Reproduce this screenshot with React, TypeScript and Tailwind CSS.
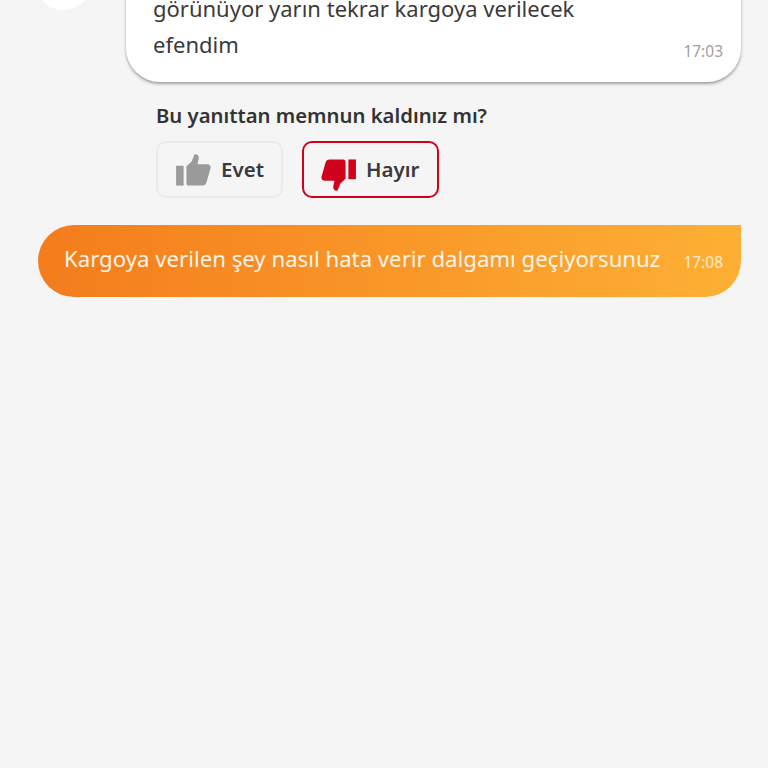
function ThumbUp() {
    return (
        <svg width="35" height="32" viewBox="0 0 37 34" className="shrink-0">
            <rect x="0" y="12.5" width="8" height="21" fill="#9a9a9a" />
            <path d="M11 13 L16.5 8 L19.5 0.5 C22.5 -0.2 24.5 1.8 24 5 L22.8 11 L33.5 11 C36 11 37 13 36.5 15.5 L32.5 29.5 C31.8 32.5 30 33.5 28 33.5 L13.5 33.5 C12 33.5 11 32.5 11 31 Z" fill="#9a9a9a" />
        </svg>
    )
}

function ThumbDown() {
    return (
        <svg width="35" height="32" viewBox="0 0 37 34" className="shrink-0 mt-[10px]">
            <rect x="29" y="0.5" width="8" height="21" fill="#d0021b" />
            <path d="M26 21 L20.5 26 L17.5 33.5 C14.5 34.2 12.5 32.2 13 29 L14.2 23 L3.5 23 C1 23 0 21 0.5 18.5 L4.5 4.5 C5.2 1.5 7 0.5 9 0.5 L23.5 0.5 C25 0.5 26 1.5 26 3 Z" fill="#d0021b" />
        </svg>
    )
}

export default function App() {
    return (
        <div className="w-full h-[768px] overflow-hidden bg-[#f5f5f5] font-['Noto_Sans',sans-serif]">
            <div className="flex items-start pl-[35px] pr-[27px] -mt-[40px]">
                <div className="w-[57px] h-[50px] rounded-b-full bg-white shrink-0" />
                <div className="ml-[34px] flex-1 h-[122px] relative bg-white rounded-b-[34px] shadow-[0_2px_3px_rgba(0,0,0,0.35)] pl-[27px] pt-[30px]">
                    <p className="text-[22px] leading-[36px] text-[#3a3a3a]">görünüyor yarın tekrar kargoya verilecek</p>
                    <p className="text-[22px] leading-[36px] text-[#3a3a3a]">efendim</p>
                    <span className="absolute right-[18px] bottom-[21px] text-[15.5px] leading-[20px] text-[#a0a0a0]">17:03</span>
                </div>
            </div>

            <div className="pl-[156px] mt-[18px]">
                <div className="text-[20.3px] leading-[30px] font-semibold text-[#333333]">Bu yanıttan memnun kaldınız mı?</div>
                <div className="flex gap-[19px] mt-[11px]">
                    <button className="w-[127px] h-[57px] flex items-center pl-[18px] gap-[10px] rounded-[10px] border-2 border-[#ebebeb] bg-[#f5f5f5]">
                        <ThumbUp />
                        <span className="text-[20.5px] font-semibold text-[#3a3a3a]">Evet</span>
                    </button>
                    <button className="w-[137px] h-[57px] flex items-center pl-[17px] gap-[10px] rounded-[10px] border-2 border-[#d0021b] bg-[#f5f5f5]">
                        <ThumbDown />
                        <span className="text-[20.5px] font-semibold text-[#3a3a3a]">Hayır</span>
                    </button>
                </div>
            </div>

            <div className="ml-[38px] mr-[27px] mt-[27px] h-[72px] flex items-center justify-between pl-[26px] pr-[18px] rounded-l-[36px] rounded-br-[36px] bg-linear-to-r from-[#f47c1c] to-[#fdb034]">
                <span className="text-[22.2px] leading-[30px] -mt-[5px] whitespace-nowrap text-[#fff4e6]">Kargoya verilen şey nasıl hata verir dalgamı geçiyorsunuz</span>
                <span className="text-[15.5px] mt-[3px] text-[#ffeacc]">17:08</span>
            </div>
        </div>
    )
}
